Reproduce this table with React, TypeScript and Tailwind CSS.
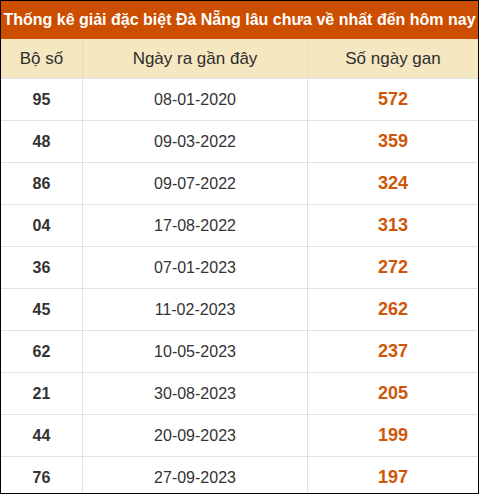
import React from "react";

const rows: [string, string, string][] = [
  ["95", "08-01-2020", "572"],
  ["48", "09-03-2022", "359"],
  ["86", "09-07-2022", "324"],
  ["04", "17-08-2022", "313"],
  ["36", "07-01-2023", "272"],
  ["45", "11-02-2023", "262"],
  ["62", "10-05-2023", "237"],
  ["21", "30-08-2023", "205"],
  ["44", "20-09-2023", "199"],
  ["76", "27-09-2023", "197"],
];

export default function App() {
  return (
    <div
      className="w-[479px] h-[494px] border border-black overflow-hidden bg-white"
      style={{ fontFamily: '"Liberation Sans", Arial, sans-serif' }}
    >
      <div className="h-[38px] bg-[#cc4e00] text-white font-bold text-[16px] flex items-center justify-center whitespace-nowrap">
        Thống kê giải đặc biệt Đà Nẵng lâu chưa về nhất đến hôm nay
      </div>
      <div className="grid grid-cols-[82px_225px_1fr] h-[40px] bg-[#f5e7c0] text-[#2e2e2e] text-[17px] border-b border-[#dde3e6]">
        <div className="flex items-center justify-center border-r border-[#e6dcc4]">Bộ số</div>
        <div className="flex items-center justify-center border-r border-[#e6dcc4]">Ngày ra gần đây</div>
        <div className="flex items-center justify-center">Số ngày gan</div>
      </div>
      {rows.map(([a, b, c]) => (
        <div
          key={a}
          className="grid grid-cols-[82px_225px_1fr] h-[42px] shrink-0 border-b border-[#e2e2e2] text-[16px]"
        >
          <div className="flex items-center justify-center border-r border-[#e2e2e2] font-bold text-[#333]">{a}</div>
          <div className="flex items-center justify-center border-r border-[#e2e2e2] text-[#333]">{b}</div>
          <div className="flex items-center justify-center font-bold text-[#cf5608] text-[18px]">{c}</div>
        </div>
      ))}
    </div>
  );
}
